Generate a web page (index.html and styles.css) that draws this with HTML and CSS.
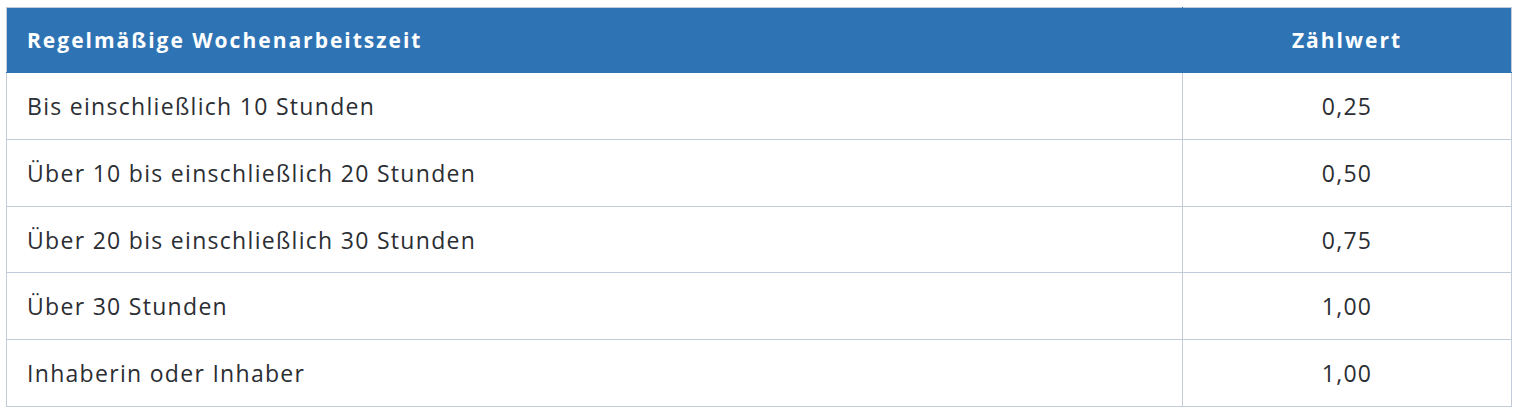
FILE: index.html
```html
<!DOCTYPE html>
<html lang="de">
<head>
<meta charset="utf-8">
<link rel="stylesheet" href="styles.css">
</head>
<body>
<div class="wrap">
<table class="tbl">
  <colgroup><col class="c1"><col class="c2"></colgroup>
  <thead>
    <tr class="head"><th class="left">Regelmäßige Wochenarbeitszeit</th><th class="center">Zählwert</th></tr>
  </thead>
  <tbody>
    <tr class="r67"><td class="left">Bis einschließlich 10 Stunden</td><td class="center">0,25</td></tr>
    <tr class="r67"><td class="left">Über 10 bis einschließlich 20 Stunden</td><td class="center">0,50</td></tr>
    <tr class="r66"><td class="left">Über 20 bis einschließlich 30 Stunden</td><td class="center">0,75</td></tr>
    <tr class="r67"><td class="left">Über 30 Stunden</td><td class="center">1,00</td></tr>
    <tr class="r67"><td class="left">Inhaberin oder Inhaber</td><td class="center">1,00</td></tr>
  </tbody>
</table>
</div>
</body>
</html>
```
FILE: styles.css
```css
html, body { margin: 0; padding: 0; background: #ffffff; }
.wrap { padding: 7px 0 0 6px; }
.tbl {
  border-collapse: collapse;
  width: 1505px;
  table-layout: fixed;
  font-family: "Open Sans", "Liberation Sans", sans-serif;
  font-size: 23px;
  letter-spacing: 1.3px;
  color: #2b2e33;
}
.c1 { width: 1176px; }
.c2 { width: 329px; }
.tbl th, .tbl td {
  border: 1px solid #c3cbdb;
  padding: 0 0 0 20px;
  vertical-align: middle;
}
.tbl th.center, .tbl td.center { padding: 0; text-align: center; }
.tbl th.left, .tbl td.left { text-align: left; }
.head { height: 65px; }
.head th {
  background: #2e74b5;
  color: #ffffff;
  font-weight: 700;
  font-size: 21px;
  letter-spacing: 2px;
  border-color: #2e74b5;
  border-top-color: #c3cbdb;
}
.head th + th { border-left: 1px solid #d6e0ee; }
.head th:first-child { border-left-color: #c3cbdb; }
.head th:last-child { border-right-color: #c3cbdb; }
.r67 { height: 67px; }
.r66 { height: 66px; }
```
